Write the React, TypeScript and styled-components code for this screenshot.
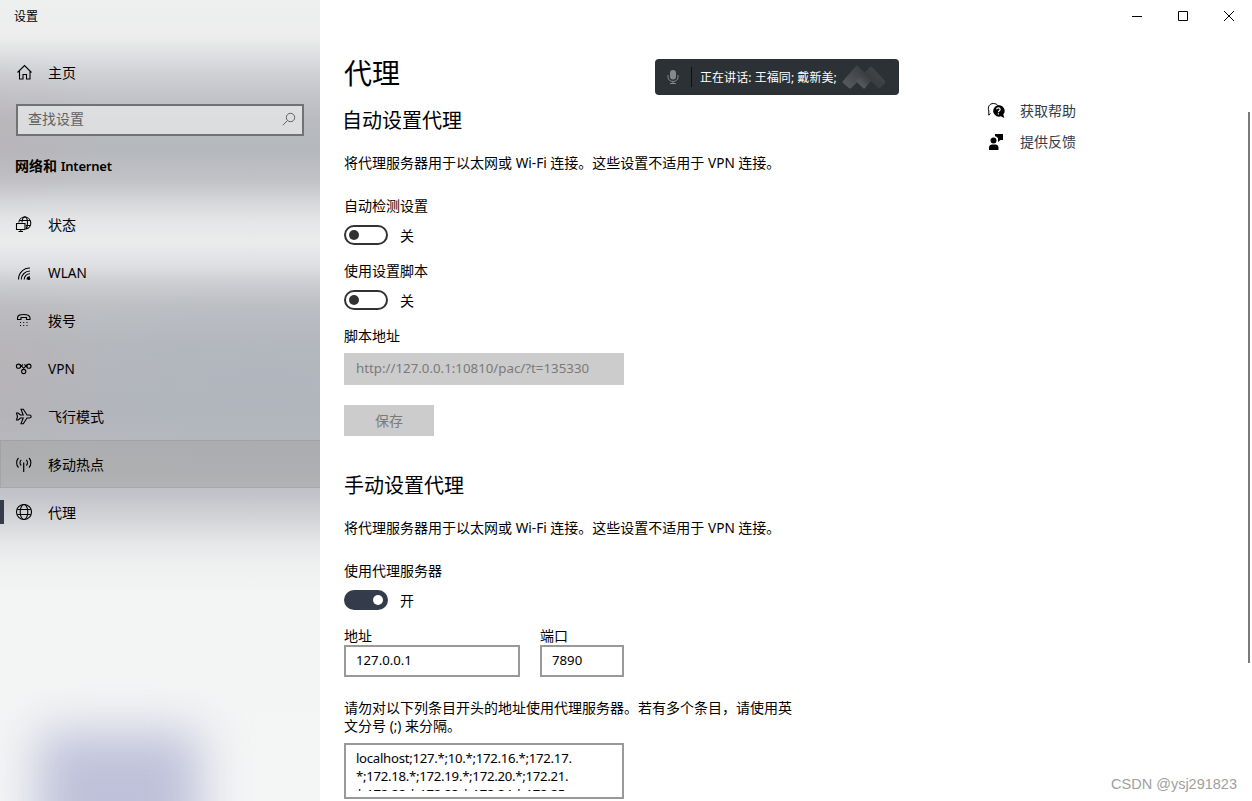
import React from 'react';
import styled, { createGlobalStyle, css } from 'styled-components';

const GlobalStyle = createGlobalStyle`
  * {
    box-sizing: border-box;
  }

  body {
    margin: 0;
    background: #fff;
    color: #000;
    font-family: 'Noto Sans', 'Noto Sans CJK SC', sans-serif;
    font-size: 14px;
    line-height: 20px;
    overflow: hidden;
  }

  h1, h2, p {
    margin: 0;
    font-weight: 400;
  }
`;

const Window = styled.div`
  display: flex;
  width: 1252px;
  height: 801px;
  overflow: hidden;
  position: relative;
`;

const Sidebar = styled.aside`
  width: 320px;
  flex-shrink: 0;
  position: relative;
  overflow: hidden;
  background:
    radial-gradient(ellipse 110px 80px at 0 130px, rgba(190, 170, 170, 0.25), rgba(190, 170, 170, 0)),
    radial-gradient(ellipse 110px 100px at 0 370px, rgba(190, 170, 170, 0.25), rgba(190, 170, 170, 0)),
    radial-gradient(ellipse 220px 100px at 260px 380px, rgba(165, 175, 200, 0.2), rgba(165, 175, 200, 0)),
    linear-gradient(
      180deg,
      #eeefef 0,
      #ededed 36px,
      #dfe0e2 54px,
      #d0d2d6 72px,
      #c3c5ca 95px,
      #b9bbc0 120px,
      #b5b8bd 150px,
      #c1c2c6 180px,
      #d6d7da 202px,
      #e5e6e7 222px,
      #eaebeb 243px,
      #dedfe2 266px,
      #cbcdd1 284px,
      #bdbfc3 306px,
      #b5b8bc 345px,
      #b3b6bb 410px,
      #b9babf 470px,
      #c3c4c9 495px,
      #d4d5d8 520px,
      #e5e6e7 542px,
      #eeefef 562px,
      #f3f4f4 595px,
      #f4f5f5 100%
    );

  &::after {
    content: '';
    position: absolute;
    left: 38px;
    top: 732px;
    width: 162px;
    height: 170px;
    background: #bfc1da;
    filter: blur(24px);
  }
`;

const WindowTitle = styled.div`
  height: 32px;
  padding-left: 14px;
  font-size: 12px;
  line-height: 34px;
`;

const NavItem = styled.div<{ $state?: 'hover' | 'active' }>`
  display: flex;
  align-items: center;
  gap: 16px;
  height: 48px;
  padding-left: 14px;
  border: 1px solid transparent;
  border-right: 0;
  position: relative;

  ${({ $state }) =>
    $state === 'hover' &&
    css`
      background: rgba(150, 150, 145, 0.3);
      border-color: rgba(120, 120, 120, 0.2);
    `}

  ${({ $state }) =>
    $state === 'active' &&
    css`
      &::before {
        content: '';
        position: absolute;
        left: -1px;
        top: 11px;
        width: 4px;
        height: 24px;
        background: #343b4a;
      }
    `}
`;

const NavText = styled.span`
  position: relative;
  top: 1px;
`;

const HomeItem = styled(NavItem)`
  margin-top: 16px;
  padding-left: 15px;
  gap: 15px;
`;

const NavIcon = styled.svg`
  width: 17px;
  height: 17px;
  flex-shrink: 0;
  fill: none;
  stroke: #000;
  stroke-width: 1.1;
`;

const SearchBox = styled.div`
  display: flex;
  align-items: center;
  justify-content: space-between;
  height: 32px;
  margin: 8px 16px 0;
  padding: 0 6px 2px 10px;
  border: 2px solid #707274;
  background: rgba(240, 242, 242, 0.62);
  color: #5f6163;
`;

const Category = styled.div`
  margin: 20px 0 0 15px;
  font-weight: 700;
  height: 20px;
`;

const NavList = styled.nav`
  margin-top: 24px;
`;

const Latin = styled.span`
  font-family: 'Noto Sans', sans-serif;
  font-size: 13.6px;
`;

const CategoryLatin = styled(Latin)`
  font-weight: 600;
  font-size: 13px;
  letter-spacing: -0.2px;
`;

const Main = styled.main`
  width: 624px;
  padding: 53px 0 0 24px;
  flex-shrink: 0;
`;

const PageTitle = styled.h1`
  font-size: 28px;
  line-height: 40px;
`;

const SectionTitle = styled.h2<{ $top: number; $left?: number }>`
  margin: ${({ $top, $left = 0 }) => `${$top}px 0 0 ${$left}px`};
  font-size: 20px;
  line-height: 28px;
`;

const Description = styled.p`
  margin-top: 18px;
`;

const Label = styled.div<{ $top?: number }>`
  margin-top: ${({ $top = 16 }) => $top}px;
`;

const ToggleRow = styled.div`
  display: flex;
  align-items: center;
  gap: 12px;
  height: 20px;
  margin-top: 9px;
`;

const Switch = styled.div<{ $on?: boolean }>`
  display: flex;
  align-items: center;
  justify-content: ${({ $on }) => ($on ? 'flex-end' : 'flex-start')};
  width: 44px;
  height: 20px;
  padding: 0 3px;
  border: 2px solid ${({ $on }) => ($on ? '#343b4a' : '#333')};
  border-radius: 10px;
  background: ${({ $on }) => ($on ? '#343b4a' : '#fff')};

  &::after {
    content: '';
    width: 10px;
    height: 10px;
    border-radius: 50%;
    background: ${({ $on }) => ($on ? '#fff' : '#333')};
  }
`;

const ToggleText = styled.span`
  position: relative;
  top: 1px;
`;

const TextField = styled.div<{ $width: number; $disabled?: boolean }>`
  width: ${({ $width }) => $width}px;
  height: 32px;
  padding-left: 10px;
  border: 2px solid ${({ $disabled }) => ($disabled ? '#ccc' : '#999')};
  background: ${({ $disabled }) => ($disabled ? '#ccc' : '#fff')};
  color: ${({ $disabled }) => ($disabled ? '#7a7a7a' : '#000')};
  font-size: 13.2px;
  line-height: 27px;
`;

const ScriptField = styled(TextField)`
  margin-top: 7px;
  font-size: 13.3px;
`;

const SaveButton = styled.div`
  width: 90px;
  height: 31px;
  margin-top: 20px;
  background: #ccc;
  color: #7a7a7a;
  line-height: 32px;
  text-align: center;
`;

const FieldRow = styled.div`
  display: flex;
  gap: 20px;
  margin-top: 17px;
`;

const FieldLabel = styled.div`
  line-height: 18px;
`;

const BypassHint = styled.p`
  width: 456px;
  margin-top: 22px;
  line-height: 18px;
`;

const BypassField = styled.div`
  width: 280px;
  height: 56px;
  margin-top: 8px;
  padding: 4px 10px;
  border: 2px solid #999;
`;

const BypassText = styled.div`
  height: 42px;
  overflow: hidden;
  font-size: 13.2px;
  letter-spacing: -0.28px;
  line-height: 18px;
  white-space: nowrap;
`;

const Aside = styled.aside`
  flex: 1;
  padding: 101px 0 0 43px;
`;

const SupportLink = styled.div`
  display: flex;
  align-items: center;
  gap: 15px;
  height: 20px;
  margin-bottom: 11px;
  color: #343b4a;
`;

const SupportIcon = styled.svg`
  width: 18px;
  height: 18px;
  flex-shrink: 0;
`;

const WindowControls = styled.div`
  position: absolute;
  top: 0;
  right: 0;
  display: flex;
`;

const ControlButton = styled.div`
  display: flex;
  align-items: center;
  justify-content: center;
  width: 46px;
  height: 32px;

  svg {
    display: block;
    fill: none;
    stroke: #000;
  }
`;

const SpeakingBar = styled.div`
  position: absolute;
  left: 655px;
  top: 59px;
  display: flex;
  align-items: center;
  width: 244px;
  height: 36px;
  padding-left: 12px;
  border-radius: 4px;
  background: #2c3135;
  color: #fff;
  font-size: 12px;
`;

const SpeakingDivider = styled.div`
  width: 1px;
  height: 20px;
  margin: 0 8px 0 12px;
  background: #0d0f10;
`;

const SpeakingNames = styled.span`
  width: 142px;
  padding-top: 2px;
  letter-spacing: 0.06px;
  white-space: nowrap;
`;

const ScrollThumb = styled.div`
  position: absolute;
  right: 2px;
  top: 112px;
  width: 2px;
  height: 551px;
  background: #7a7a7a;
`;

const Watermark = styled.div`
  position: absolute;
  right: 15px;
  bottom: 7px;
  color: #a0a0a0;
  font-family: 'Liberation Sans', sans-serif;
  font-size: 14.5px;
`;

const icons = {
  home: (
    <path d="M1.5 8.500 8.500 1.500l7 7M3.500 7v8H7v-4.500h3.500V15H14V7" />
  ),
  status: (
    <>
      <path d="M3.800 6.500A6 6 0 1 1 11 12.900" />
      <path d="M7 6.500C7 3 8.200.9 9.800.9s2.700 2.500 2.700 6c0 2.500-.5 4.500-1.500 6M4.500 4.500h10.600M11 9.500h4.300" />
      <path d="M1.500 7.500H10v6H1.500zM5.800 13.500v2M3.500 15.500H8" />
    </>
  ),
  wlan: (
    <>
      <path d="M3.500 15.500C3.500 9 8.500 4 15 4M6.300 15.500c0-4.700 4-8.500 8.700-8.500M9.200 15.500c0-3.200 2.600-5.700 5.800-5.700" />
      <path d="M12 15.500c0-1.700 1.300-2.800 3-2.800" />
      <circle cx="13.800" cy="14.500" r="1" fill="#000" />
    </>
  ),
  dial: (
    <>
      <path d="M2.500 6C2.500 3 5.500 2.500 8.700 2.500S15 3 15 6v1.500h-3.500v-2h-5.500v2H2.500z" />
      <path d="M5 10.500h1M8.200 10.500h1M11.500 10.500h1M5 13.500h1M8.200 13.500h1M11.500 13.500h1" strokeWidth="1.200" />
    </>
  ),
  vpn: (
    <>
      <circle cx="3.500" cy="6.200" r="2.100" />
      <circle cx="13.900" cy="6.200" r="2.100" />
      <circle cx="8.700" cy="11.500" r="2.100" />
      <path d="M5.200 7.200 8 4.300M12.200 7.200 9.400 4.300M5.200 4.700 10 9.700M12.200 4.700 7.400 9.700" />
    </>
  ),
  plane: (
    <path d="M1.500 5h1.800l2 2h2.900L6 1.200h2.300L12 7h2.300c2.500 0 2.500 3 0 3H12l-3.700 5.800H6L8.200 10H5.300l-2 2H1.500l1-3.500z" />
  ),
  hotspot: (
    <>
      <path d="M8.700 6.500v9.500" strokeWidth="1.200" />
      <path d="M3.500 2C1 4.500 1 9 3.500 11.500M14 2c2.500 2.500 2.500 7 0 9.500M6.200 4C4.600 5.500 4.600 8 6.200 9.500M11.300 4c1.600 1.500 1.600 4 0 5.500" />
    </>
  ),
  globe: (
    <>
      <circle cx="9" cy="8" r="7.500" />
      <ellipse cx="9" cy="8" rx="3.800" ry="7.500" />
      <path d="M2.300 5.500h13.400M2.300 10.500h13.400" />
    </>
  ),
};

const navItems: { icon: keyof typeof icons; label: string; latin?: boolean; state?: 'hover' | 'active' }[] = [
  { icon: 'status', label: '状态' },
  { icon: 'wlan', label: 'WLAN', latin: true },
  { icon: 'dial', label: '拨号' },
  { icon: 'vpn', label: 'VPN', latin: true },
  { icon: 'plane', label: '飞行模式' },
  { icon: 'hotspot', label: '移动热点', state: 'hover' },
  { icon: 'globe', label: '代理', state: 'active' },
];

const ProxyDescription: React.FC = () => (
  <Description>
    将代理服务器用于以太网或 <Latin>Wi-Fi</Latin> 连接。这些设置不适用于 <Latin>VPN</Latin> 连接。
  </Description>
);

const Toggle: React.FC<{ on?: boolean }> = ({ on }) => (
  <ToggleRow>
    <Switch $on={on} />
    <ToggleText>{on ? '开' : '关'}</ToggleText>
  </ToggleRow>
);

const App: React.FC = () => {
  return (
    <Window>
      <GlobalStyle />

      <Sidebar>
        <WindowTitle>设置</WindowTitle>
        <HomeItem>
          <NavIcon viewBox="0 0 17 17">{icons.home}</NavIcon>
          <NavText>主页</NavText>
        </HomeItem>
        <SearchBox>
          查找设置
          <svg width="14" height="14" viewBox="0 0 14 14" fill="none" stroke="#5f6163">
            <circle cx="8.500" cy="5.500" r="4.200" />
            <path d="M5.500 8.500.8 13.200" />
          </svg>
        </SearchBox>
        <Category>
          网络和 <CategoryLatin>Internet</CategoryLatin>
        </Category>
        <NavList>
          {navItems.map((item) => (
            <NavItem key={item.label} $state={item.state}>
              <NavIcon viewBox="0 0 17 17">{icons[item.icon]}</NavIcon>
              <NavText>{item.latin ? <Latin>{item.label}</Latin> : item.label}</NavText>
            </NavItem>
          ))}
        </NavList>
      </Sidebar>

      <Main>
        <PageTitle>代理</PageTitle>

        <SectionTitle $top={14} $left={-2}>自动设置代理</SectionTitle>
        <ProxyDescription />
        <Label $top={23}>自动检测设置</Label>
        <Toggle />
        <Label>使用设置脚本</Label>
        <Toggle />
        <Label>脚本地址</Label>
        <ScriptField $width={280} $disabled>
          http://127.0.0.1:10810/pac/?t=135330
        </ScriptField>
        <SaveButton>保存</SaveButton>

        <SectionTitle $top={36}>手动设置代理</SectionTitle>
        <ProxyDescription />
        <Label $top={23}>使用代理服务器</Label>
        <Toggle on />
        <FieldRow>
          <div>
            <FieldLabel>地址</FieldLabel>
            <TextField $width={176}>127.0.0.1</TextField>
          </div>
          <div>
            <FieldLabel>端口</FieldLabel>
            <TextField $width={84}>7890</TextField>
          </div>
        </FieldRow>
        <BypassHint>
          请勿对以下列条目开头的地址使用代理服务器。若有多个条目，请使用英
          <br />
          文分号 <Latin>(;)</Latin> 来分隔。
        </BypassHint>
        <BypassField>
          <BypassText>
            localhost;127.*;10.*;172.16.*;172.17.
            <br />
            *;172.18.*;172.19.*;172.20.*;172.21.
            <br />
            *;172.22.*;172.23.*;172.24.*;172.25.
          </BypassText>
        </BypassField>
      </Main>

      <Aside>
        <SupportLink>
          <SupportIcon viewBox="0 0 18 18">
            <path d="M3.500 11.500 1.800 13.200V9C.2 5 2.800 1.500 6.200 1.500c2.300 0 4 .8 5 2.500" fill="none" stroke="#000" />
            <path d="M11.300 3.300a5.700 5.700 0 1 0 2.600 11L17.300 16l-1-3.400a5.700 5.700 0 0 0-5-9.300z" />
            <path d="M9.600 7.300c.2-2 3.500-2 3.500.1 0 1.400-1.700 1.300-1.700 2.800M11.400 11.300v1.300" fill="none" stroke="#fff" strokeWidth="1.200" />
          </SupportIcon>
          获取帮助
        </SupportLink>
        <SupportLink>
          <SupportIcon viewBox="0 0 18 18">
            <circle cx="6.500" cy="7.500" r="3" />
            <path d="M2 17v-2.500C2 12.500 3.500 11.500 5 11.500h3.500c1.700 0 3 1 3 3V17zM8 1h8v6h-2.500L11 9V5.500C10.500 4.500 9.500 3.500 8 3.300z" />
          </SupportIcon>
          提供反馈
        </SupportLink>
      </Aside>

      <WindowControls>
        <ControlButton>
          <svg width="10" height="10" viewBox="0 0 10 10"><path d="M0 5.500h10" /></svg>
        </ControlButton>
        <ControlButton>
          <svg width="10" height="10" viewBox="0 0 10 10"><path d="M.5.5h9v9h-9z" /></svg>
        </ControlButton>
        <ControlButton>
          <svg width="10" height="10" viewBox="0 0 10 10"><path d="m0 0 10 10m0-10L0 10" /></svg>
        </ControlButton>
      </WindowControls>

      <SpeakingBar>
        <svg width="12" height="16" viewBox="0 0 12 16" fill="none" stroke="#85898c">
          <rect x="3" y="1" width="6" height="9.500" rx="3" fill="#85898c" stroke="none" />
          <path d="M1 6v2c0 6 10 6 10 0V6M6 12.500V14M3 14.500h6" />
        </svg>
        <SpeakingDivider />
        <SpeakingNames>正在讲话: 王福同; 戴新美;</SpeakingNames>
        <svg width="46" height="26" viewBox="0 0 46 26">
          <defs>
            <linearGradient id="facetLeft" x1="0" y1="1" x2="1" y2="0">
              <stop offset="0" stopColor="#5b5e61" />
              <stop offset=".6" stopColor="#45494c" />
              <stop offset="1" stopColor="#34383b" />
            </linearGradient>
            <linearGradient id="facetRight" x1="0" y1="1" x2="1" y2="0.2">
              <stop offset="0" stopColor="#66696b" />
              <stop offset=".5" stopColor="#393d40" />
              <stop offset="1" stopColor="#46494c" />
            </linearGradient>
          </defs>
          <path d="M1 17 14 2q1-1 2 0l8 8L9 24q-1 1-2 0l-6-5q-1-1 0-2z" fill="url(#facetLeft)" />
          <path d="M15 16 28 3q1-1 2 0l13 14q1 1 0 2l-5 5q-1 1-2 0l-7-7-6 7q-1 1-2 0l-6-6q-1-1 0-2z" fill="url(#facetRight)" />
        </svg>
      </SpeakingBar>

      <ScrollThumb />
      <Watermark>CSDN @ysj291823</Watermark>
    </Window>
  );
};

export default App;
